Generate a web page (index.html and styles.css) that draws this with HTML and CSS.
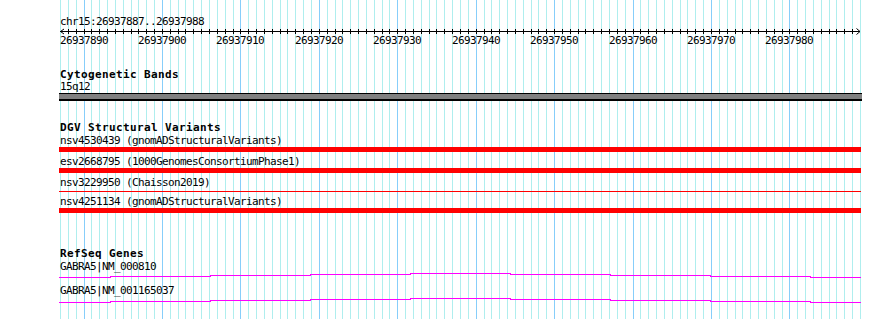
FILE: index.html
```html
<!DOCTYPE html>
<html lang="en">

<head>
    <meta charset="UTF-8">
    <title>chr15:26937887..26937988</title>
    <link rel="stylesheet" href="styles.css">
</head>

<body>
    <div class="browser">
        <svg class="grid" id="grid" width="890" height="319"></svg>

        <div class="panel">
            <div class="segment">chr15:26937887..26937988</div>
            <svg class="ruler" id="ruler" width="890" height="6"></svg>
            <div class="scale">
                <span class="scale-label" style="left: 60px;">26937890</span>
                <span class="scale-label" style="left: 138px;">26937900</span>
                <span class="scale-label" style="left: 216px;">26937910</span>
                <span class="scale-label" style="left: 295px;">26937920</span>
                <span class="scale-label" style="left: 373px;">26937930</span>
                <span class="scale-label" style="left: 452px;">26937940</span>
                <span class="scale-label" style="left: 530px;">26937950</span>
                <span class="scale-label" style="left: 609px;">26937960</span>
                <span class="scale-label" style="left: 687px;">26937970</span>
                <span class="scale-label" style="left: 765px;">26937980</span>
            </div>

            <div class="track track-bands">
                <div class="track-title">Cytogenetic Bands</div>
                <div class="feature-label band-label">15q12</div>
                <div class="band"></div>
            </div>

            <div class="track track-dgv">
                <div class="track-title">DGV Structural Variants</div>
                <div class="variant">
                    <div class="feature-label">nsv4530439 (gnomADStructuralVariants)</div>
                    <div class="variant-bar"></div>
                </div>
                <div class="variant">
                    <div class="feature-label">esv2668795 (1000GenomesConsortiumPhase1)</div>
                    <div class="variant-bar"></div>
                </div>
                <div class="variant">
                    <div class="feature-label">nsv3229950 (Chaisson2019)</div>
                    <div class="variant-bar variant-thin"></div>
                </div>
                <div class="variant">
                    <div class="feature-label">nsv4251134 (gnomADStructuralVariants)</div>
                    <div class="variant-bar"></div>
                </div>
            </div>

            <div class="track track-genes">
                <div class="track-title">RefSeq Genes</div>
                <div class="gene">
                    <div class="feature-label">GABRA5|NM_000810</div>
                    <svg class="intron" width="890" height="11">
                        <path d="M59 4.5H110.5V3.5H210.5V2.5H310.5V1.5H410.5V0.5H510.5V1.5H610.5V2.5H710.5V3.5H810.5V4.5H861" />
                    </svg>
                </div>
                <div class="gene">
                    <div class="feature-label">GABRA5|NM_001165037</div>
                    <svg class="intron" width="890" height="11">
                        <path d="M59 5.5H110.5V4.5H210.5V3.5H310.5V2.5H410.5V1.5H510.5V2.5H610.5V3.5H710.5V4.5H810.5V5.5H861" />
                    </svg>
                </div>
            </div>
        </div>
    </div>

    <script src="script.js"></script>
</body>

</html>
```

FILE: styles.css
```css
body {
    margin: 0;
    background: #fff;
    font-family: "DejaVu Sans Mono", "Liberation Mono", monospace;
    font-size: 11px;
    line-height: 13px;
    color: #000;
}

.browser {
    position: relative;
    width: 890px;
    height: 319px;
    overflow: hidden;
}

.grid {
    position: absolute;
    top: 0;
    left: 0;
    shape-rendering: crispEdges;
}

.grid line {
    stroke: #afeeee;
    stroke-width: 1;
}

.grid line.major {
    stroke: #87cefa;
}

.panel {
    position: relative;
}

.segment,
.feature-label,
.track-title {
    margin-left: 60px;
    white-space: pre;
    letter-spacing: -0.62px;
}

.segment {
    padding-top: 15px;
}

.ruler {
    display: block;
    overflow: visible;
}

.ruler line,
.ruler polyline {
    stroke: #000;
    stroke-width: 1;
    fill: none;
}

.ruler line {
    shape-rendering: crispEdges;
}

.scale {
    position: relative;
    height: 13px;
}

.scale-label {
    position: absolute;
    top: 0;
    letter-spacing: -0.62px;
}

.track-title {
    font-weight: bold;
    letter-spacing: 0.38px;
}

.track-bands {
    margin-top: 21px;
}

.band-label {
    margin-top: -1px;
}

.band {
    margin-left: 59px;
    width: 803px;
    height: 5px;
    background: #808080;
    border-top: 1px solid #000;
    border-bottom: 2px solid #000;
}

.track-dgv {
    margin-top: 20px;
}

.variant {
    margin-bottom: 3px;
}

.variant-bar {
    margin-left: 59px;
    width: 802px;
    height: 5px;
    background: #ff0000;
}

.variant-thin {
    height: 1px;
    margin-top: 2px;
    margin-bottom: 2px;
}

.track-genes {
    margin-top: 34px;
}

.intron {
    display: block;
    shape-rendering: crispEdges;
}

.intron path {
    stroke: #ff00ff;
    stroke-width: 1;
    fill: none;
}
```

FILE: script.js
```js
const svgNS = 'http://www.w3.org/2000/svg';
const start = 26937887;
const bases = 102;
const left = 60;
const width = 800;

const grid = document.getElementById('grid');
const ruler = document.getElementById('ruler');

function makeLine(x1, y1, x2, y2) {
    const line = document.createElementNS(svgNS, 'line');
    line.setAttribute('x1', x1);
    line.setAttribute('y1', y1);
    line.setAttribute('x2', x2);
    line.setAttribute('y2', y2);
    return line;
}

for (let k = 0; k <= bases; k++) {
    const x = Math.round(left + k * width / bases) + 0.5;
    const line = makeLine(x, 0, x, 319);
    if ((start + k) % 10 === 0) line.classList.add('major');
    grid.appendChild(line);

    if (k > 0 && k < bases) {
        ruler.appendChild(makeLine(x, 1, x, 6));
    }
}

// axis line and end arrows
ruler.appendChild(makeLine(left, 3.5, left + width, 3.5));

const arrowLeft = document.createElementNS(svgNS, 'polyline');
arrowLeft.setAttribute('points', '64,1 60.5,3.5 64,6');
ruler.appendChild(arrowLeft);

const arrowRight = document.createElementNS(svgNS, 'polyline');
arrowRight.setAttribute('points', '856.5,0.5 860,3.5 856.5,6.5');
ruler.appendChild(arrowRight);
```
